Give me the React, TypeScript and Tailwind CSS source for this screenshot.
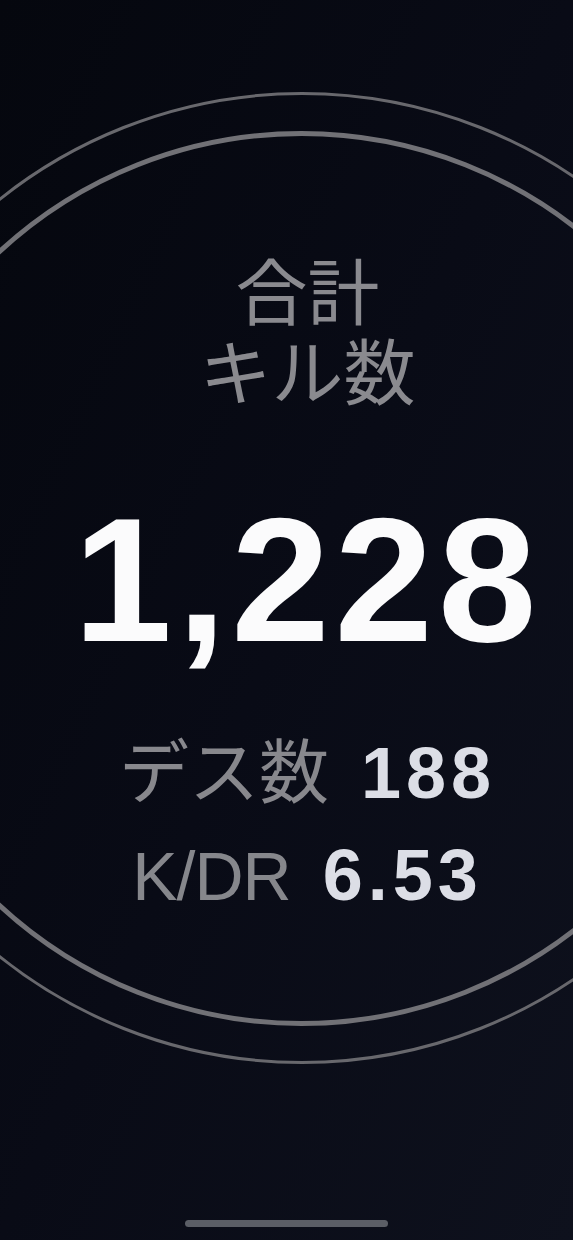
const jp = "font-['Noto_Sans_CJK_JP','Noto_Sans',sans-serif]";
const num = "font-['Liberation_Sans',Arial,sans-serif]";

function StatRow({ label, value, labelClass }: { label: string; value: string; labelClass: string }) {
  return (
    <div className="flex items-baseline gap-[32px]">
      <span className={labelClass}>{label}</span>
      <span className={`${num} text-[72px] font-bold leading-none tracking-[5px] text-[#dcdee6]`}>{value}</span>
    </div>
  );
}

export default function App() {
  return (
    <div className="relative h-[1240px] w-full overflow-hidden bg-gradient-to-br from-[#05070e] via-[#090b16] to-[#0e111d]">
      {/* rings */}
      <div className="pointer-events-none absolute left-[-184px] top-[92px] h-[972px] w-[972px] rounded-full border-[3px] border-[#68686d]" />
      <div className="pointer-events-none absolute left-[-146px] top-[131px] h-[895px] w-[895px] rounded-full border-[5px] border-[#717176]" />

      <div className="relative flex h-full flex-col">
        <div className="flex flex-col items-center pl-[42px] pt-[248px]">
          <p className={`${jp} text-center text-[72px] leading-[80px] text-[#8a8a8f]`}>
            合計
            <br />
            キル数
          </p>

          <div className={`${num} mt-[84px] text-[177px] font-bold leading-none tracking-[5px] text-[#fbfbfc]`}>
            1,228
          </div>

          <div className="mt-[64px] flex flex-col items-center gap-[30px]">
            <StatRow
              label="デス数"
              value="188"
              labelClass={`${jp} text-[70px] leading-none text-[#88888d]`}
            />
            <StatRow
              label="K/DR"
              value="6.53"
              labelClass={`${num} text-[68px] leading-none tracking-[-1px] text-[#86878c]`}
            />
          </div>
        </div>

        <div className="mt-auto mb-[13px] flex justify-center">
          <div className="h-[7px] w-[203px] rounded-full bg-[#5b5e66]" />
        </div>
      </div>
    </div>
  );
}
